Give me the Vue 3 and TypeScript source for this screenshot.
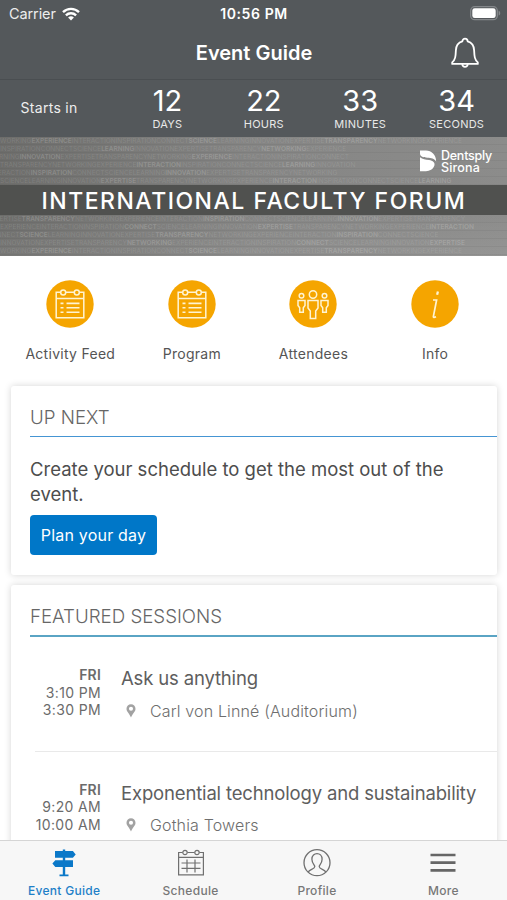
<script setup lang="ts">
interface Unit { value: string; label: string }
interface Shortcut { icon: 'calendar' | 'people' | 'info'; label: string }
interface Session { day: string; start: string; end: string; title: string; place: string }
interface Word { text: string; strong: boolean }

const countdown: Unit[] = [
  { value: '12', label: 'DAYS' },
  { value: '22', label: 'HOURS' },
  { value: '33', label: 'MINUTES' },
  { value: '34', label: 'SECONDS' },
]

const shortcuts: Shortcut[] = [
  { icon: 'calendar', label: 'Activity Feed' },
  { icon: 'calendar', label: 'Program' },
  { icon: 'people', label: 'Attendees' },
  { icon: 'info', label: 'Info' },
]

const sessions: Session[] = [
  { day: 'FRI', start: '3:10 PM', end: '3:30 PM', title: 'Ask us anything', place: 'Carl von Linné (Auditorium)' },
  { day: 'FRI', start: '9:20 AM', end: '10:00 AM', title: 'Exponential technology and sustainability', place: 'Gothia Towers' },
]

const tabs = ['Event Guide', 'Schedule', 'Profile', 'More']

const vocabulary = ['NETWORKING', 'EXPERIENCE', 'INTERACTION', 'INSPIRATION', 'CONNECT', 'SCIENCE', 'LEARNING', 'INNOVATION', 'EXPERTISE', 'TRANSPARENCY']

function wordRow(row: number, count: number): Word[] {
  return Array.from({ length: count }, (_, i) => ({
    text: vocabulary[(row * 3 + i) % vocabulary.length],
    strong: (row * 2 + i) % 4 === 1,
  }))
}

// The rows beside the logo stop short of it.
const upperRows = [12, 9, 9, 9, 9, 12].map((count, i) => wordRow(i, count))
const lowerRows = [12, 12, 12, 12, 12].map((count, i) => wordRow(i + 6, count))
</script>

<template>
  <div class="screen">
    <header class="top">
      <div class="status">
        <div class="carrier">
          <span>Carrier</span>
          <svg width="18" height="14" viewBox="0 0 18 14" fill="none" stroke="#fff" stroke-width="2.4">
            <path d="M1 5.1a11.5 11.5 0 0 1 16 0" />
            <path d="M3.9 8.3a7.4 7.4 0 0 1 10.2 0" />
            <path d="M9 13.6 6.1 10.6a4.1 4.1 0 0 1 5.8 0z" fill="#fff" stroke="none" />
          </svg>
        </div>
        <div class="clock">10:56 PM</div>
        <div class="power">
          <svg width="31" height="15" viewBox="0 0 31 15">
            <rect x="0.7" y="0.7" width="26.6" height="13" rx="4" fill="none" stroke="#84878a" stroke-width="1.3" />
            <rect x="2.3" y="2.3" width="23.4" height="9.8" rx="2.4" fill="#fff" />
            <path d="M28.6 4.8c2.2.6 2.2 4.2 0 4.8z" fill="#84878a" />
          </svg>
        </div>
      </div>
      <div class="titlebar">
        <h1>Event Guide</h1>
        <svg class="bell" width="30" height="32" viewBox="0 0 30 32" fill="none" stroke="#fff" stroke-width="1.8" stroke-linejoin="round">
          <path d="M12.4 4.3c0-3.500 5.200-3.500 5.200 0 4.300 1.200 6.300 4.600 6.500 8.800.3 6.500.5 9.500 3.700 12.300v1.500H2.200v-1.500c3.200-2.800 3.400-5.800 3.700-12.300.2-4.200 2.200-7.600 6.500-8.800z" />
          <path d="M12.200 27.200c.5 3.600 5.100 3.600 5.600 0" />
        </svg>
      </div>
      <div class="countdown">
        <div class="starts">Starts in</div>
        <div v-for="u in countdown" :key="u.label" class="unit">
          <span class="num">{{ u.value }}</span>
          <span class="cap">{{ u.label }}</span>
        </div>
      </div>
    </header>

    <section class="banner">
      <div class="words upper">
        <p v-for="(row, r) in upperRows" :key="r"><span v-for="(w, i) in row" :key="i" :class="{ strong: w.strong }">{{ w.text }} </span></p>
      </div>
      <div class="band">INTERNATIONAL FACULTY FORUM</div>
      <div class="words lower">
        <p v-for="(row, r) in lowerRows" :key="r"><span v-for="(w, i) in row" :key="i" :class="{ strong: w.strong }">{{ w.text }} </span></p>
      </div>
      <div class="brand">
        <svg width="17" height="22" viewBox="0 0 17 22" fill="#fff">
          <path d="M0 .6h6C11.500.6 16 4.800 16.200 11.500 14.500 8.300 11 7.900 7.500 7.700 3 7.500 0 6.500 0 3.500z" />
          <path d="M0 7.300C2.500 9.700 5.500 9.500 9 10 13 10.600 15.300 12.600 14.400 15.600 13.200 19.300 9.500 21.200 6 21.200H0z" />
        </svg>
        <div class="brandname"><span>Dentsply</span><span>Sirona</span></div>
      </div>
    </section>

    <nav class="shortcuts">
      <a v-for="s in shortcuts" :key="s.label" class="shortcut">
        <svg width="48" height="48" viewBox="0 0 48 48" fill="none" stroke="#fff4d2" stroke-width="1.500">
          <circle cx="24" cy="24" r="23.700" fill="#f5a500" stroke="none" />
          <g v-if="s.icon === 'calendar'">
            <path d="M14.500 12.200h-4.300v25.600h27.600V12.200h-4.300M20 12.200h8M10.200 18.400h27.600" />
            <circle cx="17.200" cy="12.400" r="2.500" />
            <circle cx="30.800" cy="12.400" r="2.500" />
            <path d="M20.500 23.400h13M20.500 27.800h13M20.500 32.200h13M14.500 23.400h3M14.500 27.800h3M14.500 32.200h3" stroke-width="1.600" />
          </g>
          <g v-else-if="s.icon === 'people'">
            <circle cx="24" cy="14.500" r="3.700" />
            <path d="M19 20.500h10v7.500l-2.300 3v7.500h-5.400V31L19 28z" />
            <circle cx="12.500" cy="15.800" r="2.300" />
            <path d="M9 20.500h7v5l-1.700 2.200v4.500h-3.600v-4.500L9 25.500z" />
            <circle cx="35.500" cy="15.800" r="2.300" />
            <path d="M32 20.500h7v5l-1.700 2.200v4.500h-3.600v-4.500L32 25.500z" />
          </g>
          <g v-else>
            <path d="m26.900 11.400-.8 3.300" stroke-width="2.300" />
            <path d="M22 20h3.600l-3.200 16.300c-.2 1.200.8 1.300 2.600.5" stroke-width="1.700" />
          </g>
        </svg>
        <span>{{ s.label }}</span>
      </a>
    </nav>

    <section class="card next">
      <h2>UP NEXT</h2>
      <p class="prompt">Create your schedule to get the most out of the event.</p>
      <button type="button">Plan your day</button>
    </section>

    <section class="card featured">
      <h2>FEATURED SESSIONS</h2>
      <article v-for="s in sessions" :key="s.title" class="session">
        <div class="when"><b>{{ s.day }}</b><span>{{ s.start }}</span><span>{{ s.end }}</span></div>
        <div class="what">
          <h3>{{ s.title }}</h3>
          <div class="place">
            <svg width="10" height="14" viewBox="0 0 10 14">
              <path fill="#a2a2a2" fill-rule="evenodd" d="M5 .3a4.500 4.500 0 0 1 4.500 4.500C9.500 8 6.500 9.500 5 13.600 3.500 9.500.5 8 .5 4.800A4.500 4.500 0 0 1 5 .3zm0 2.400a2 2 0 1 0 0 4.100 2 2 0 0 0 0-4.100z" />
            </svg>
            <span>{{ s.place }}</span>
          </div>
        </div>
      </article>
    </section>

    <footer class="tabs">
      <a v-for="(t, i) in tabs" :key="t" :class="{ active: i === 0 }">
        <svg width="30" height="30" viewBox="0 0 30 30" fill="none" stroke="#707070" stroke-width="1.200">
          <g v-if="i === 0" fill="#0b78c8" stroke="none">
            <path d="M13.800 1.500h2.400V3h7.700l2.800 3.400-2.800 3.400h-7.700v2.400h7.800v6.800h-7.800v7.500h3.300v1.700h-9v-1.700h3.300V19H6.300l-2.900-3.400 2.900-3.400h7.500V9.800H6V3h7.800z" />
          </g>
          <g v-else-if="i === 1">
            <path d="M6.600 4.500H2.600v22.400h24.800V4.500h-4M11.400 4.500h7.200M2.600 9.300h24.800" />
            <circle cx="9" cy="4.500" r="2.200" /><circle cx="21" cy="4.500" r="2.200" />
            <path d="M11 11.500v13M19 11.500v13M5.500 15h19M5.500 20.300h19" />
          </g>
          <g v-else-if="i === 2" stroke-width="1.300">
            <circle cx="15" cy="14.700" r="13" />
            <path d="M6.200 24.200c1-3 6.600-2.700 6.600-5.700 0-1.600-2.900-3.100-2.900-7.200 0-7.500 10.200-7.500 10.200 0 0 4.100-2.900 5.600-2.900 7.200 0 3 5.600 2.700 6.600 5.700" />
          </g>
          <path v-else d="M2.500 7h25M2.500 14.700h25M2.500 22.400h25" stroke="#666" stroke-width="2.700" />
        </svg>
        <span>{{ t }}</span>
      </a>
    </footer>
  </div>
</template>

<style>
body { margin: 0; }
</style>

<style scoped>
* { box-sizing: border-box; }
h1, h2, h3, p { margin: 0; font-weight: 400; }
svg { display: block; flex: none; }
.screen { width: 507px; height: 900px; overflow: hidden; display: flex; flex-direction: column; background: #fff; font-family: Inter, "Liberation Sans", sans-serif; color: #555; }

.top { flex: none; height: 137px; background: #54585b; color: #fff; }
.status { height: 27px; display: grid; grid-template-columns: 1fr auto 1fr; align-items: center; padding: 0 6px 0 9px; font-size: 14.500px; }
.carrier { display: flex; gap: 6px; align-items: center; color: #eceded; letter-spacing: -0.100px; }
.clock { font-weight: 600; font-size: 14px; letter-spacing: 0.600px; margin-right: 2px; }
.power { display: flex; justify-content: flex-end; }
.titlebar { height: 53px; display: grid; grid-template-columns: 1fr auto 1fr; align-items: center; border-bottom: 1px solid #4a4e51; }
h1 { grid-column: 2; font-size: 20px; font-weight: 600; line-height: 24px; margin-left: 1px; margin-top: -1px; }
.bell { justify-self: end; margin-right: 27px; }
.countdown { height: 57px; display: grid; grid-template-columns: 119px repeat(4, 96.400px); }
.starts { padding: 18px 0 0 20.500px; font-size: 14px; line-height: 20px; letter-spacing: 0.300px; color: #eee; }
.unit { display: flex; flex-direction: column; align-items: center; padding: 5px 0 0 0.500px; }
.num { font-size: 29px; line-height: 31px; font-weight: 400; }
.cap { font-size: 11px; line-height: 16px; letter-spacing: 0.250px; color: #e8e8e8; }

.banner { flex: none; position: relative; height: 119px; overflow: hidden; background: linear-gradient(90deg, #6d6d6b, #858584 50%, #8c8c8b); }
.words { overflow: hidden; white-space: nowrap; font-size: 6.500px; line-height: 8px; color: rgba(255, 255, 255, 0.120); }
.words p { height: 8px; border-bottom: 1px solid rgba(50, 50, 50, 0.070); }
.words p:nth-child(odd) { text-indent: -13px; }
.words .strong { font-weight: 600; color: rgba(255, 255, 255, 0.180); }
.upper { height: 48px; }
.lower { height: 41px; background: linear-gradient(transparent, rgba(255, 255, 255, 0.080)); }
.band { height: 30px; padding-left: 41.500px; background: #50514f; color: #fff; font-size: 23px; line-height: 33px; font-weight: 500; letter-spacing: 1.500px; white-space: nowrap; }
.brand { position: absolute; left: 420px; top: 13px; display: flex; gap: 4px; color: #fff; }
.brandname { display: flex; flex-direction: column; font-size: 12.500px; line-height: 11.500px; font-weight: 500; letter-spacing: -0.250px; }
.brandname span:last-child { letter-spacing: 0.150px; }

.shortcuts { flex: none; height: 129px; display: grid; grid-template-columns: repeat(4, 121.600px); padding: 24px 0 0 9.500px; }
.shortcut { display: flex; flex-direction: column; align-items: center; gap: 15.500px; font-size: 14px; line-height: 20px; letter-spacing: 0.280px; color: #555; }

.card { flex: none; margin: 0 10px 0 11px; background: #fff; border-radius: 3px; box-shadow: 0 0 7px rgba(0, 0, 0, 0.170); padding-left: 19px; }
.card h2 { font-size: 18.700px; font-weight: 300; line-height: 24px; color: #666; }
.next { height: 189px; margin-top: 1px; }
.next h2 { height: 51px; padding-top: 20px; border-bottom: 1.500px solid #4595d3; }
.prompt { margin-top: 20px; width: 440px; font-size: 18.500px; line-height: 25px; color: #4d4d4d; }
button { display: block; margin-top: 8px; width: 127px; height: 40px; border: 0; border-radius: 4px; background: #0077c8; color: #fff; font: 400 16px/40px Inter, sans-serif; letter-spacing: 0.200px; padding: 0; }
.featured { height: 270px; margin-top: 10px; }
.featured h2 { height: 52px; padding-top: 20px; border-bottom: 2px solid #5aa4c4; }
.session { height: 114.500px; margin-left: 5px; padding-top: 29px; display: flex; gap: 20px; border-bottom: 1.500px solid #e9e9e9; }
.when { width: 66px; display: flex; flex-direction: column; align-items: flex-end; font-size: 14px; line-height: 17.500px; letter-spacing: 0.350px; color: #6b6b6b; white-space: nowrap; }
.when b { font-weight: 600; letter-spacing: 0.200px; }
h3 { font-size: 18.500px; line-height: 24px; letter-spacing: -0.160px; color: #5e5e5e; white-space: nowrap; }
.place { display: flex; gap: 14px; align-items: center; padding-left: 5px; margin-top: 8.500px; font-size: 16px; line-height: 24px; letter-spacing: 0.150px; font-weight: 300; color: #6e6e6e; }

.tabs { flex: none; position: relative; margin-top: -15px; height: 60px; border-top: 1px solid #d5d5d5; background: #f7f7f7; display: grid; grid-template-columns: repeat(4, 126.400px); padding-left: 1px; }
.tabs a { display: flex; flex-direction: column; align-items: center; padding-top: 7px; font-size: 12px; line-height: 16px; letter-spacing: 0.300px; font-weight: 500; color: #777; gap: 5px; }
.tabs .active { color: #1f80c8; }
</style>
